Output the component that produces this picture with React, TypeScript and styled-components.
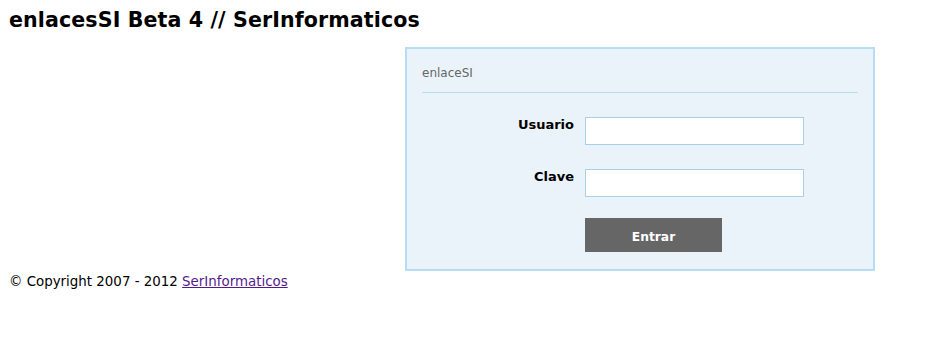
import styled, { createGlobalStyle } from "styled-components";

const GlobalStyle = createGlobalStyle`
    body {
        margin: 8px;
        font-family: "DejaVu Sans", Verdana, sans-serif;
        color: #000;
        background: #fff;
    }
`;

const App = () => {
    return (
        <>
            <GlobalStyle />
            <Title>enlacesSI Beta 4 // SerInformaticos</Title>
            <Main>
                <Panel>
                    <Legend>enlaceSI</Legend>
                    <Divider />
                    <Form onSubmit={e => e.preventDefault()}>
                        <Label htmlFor="usuario">Usuario</Label>
                        <Input id="usuario" type="text" />
                        <Label htmlFor="clave">Clave</Label>
                        <Input id="clave" type="password" />
                        <Submit type="submit">Entrar</Submit>
                    </Form>
                </Panel>
            </Main>
            <Footer>
                © Copyright 2007 - 2012 <FooterLink href="#">SerInformaticos</FooterLink>
            </Footer>
        </>
    );
};

const Title = styled.h1`
    margin: 1px 0 0 1px;
    font-size: 20.6px;
    line-height: 22px;
    font-weight: bold;
    letter-spacing: 0.1px;
`;

const Main = styled.main`
    display: flex;
    padding: 16px 0 0 397px;
`;

const Panel = styled.section`
    width: 436px;
    padding: 17px 15px 17px;
    background: #ebf3fa;
    border: 2px solid #b6ddf2;
`;

const Legend = styled.div`
    font-size: 12px;
    line-height: 14px;
    color: #666;
`;

const Divider = styled.hr`
    margin: 12px 0 0;
    border: none;
    border-top: 1px solid #b6ddf2;
`;

const Form = styled.form`
    display: grid;
    grid-template-columns: 152px 219px;
    column-gap: 11px;
    row-gap: 24px;
    margin-top: 24px;
`;

const Label = styled.label`
    text-align: right;
    font-size: 13px;
    font-weight: bold;
    line-height: 15px;
`;

const Input = styled.input`
    box-sizing: border-box;
    width: 219px;
    height: 28px;
    margin: 0;
    border: 1px solid #a9d0e6;
    background: #fff;
`;

const Submit = styled.button`
    grid-column: 2;
    margin-top: -3px;
    width: 137px;
    height: 34px;
    padding: 3px 0 0;
    border: none;
    background: #666;
    color: #fff;
    font-family: "DejaVu Sans", Verdana, sans-serif;
    font-size: 12.3px;
    font-weight: bold;
`;

const Footer = styled.footer`
    margin: 3px 0 0 1px;
    font-size: 13.4px;
    line-height: 16px;
`;

const FooterLink = styled.a`
    color: #551a8b;
`;

export default App;
